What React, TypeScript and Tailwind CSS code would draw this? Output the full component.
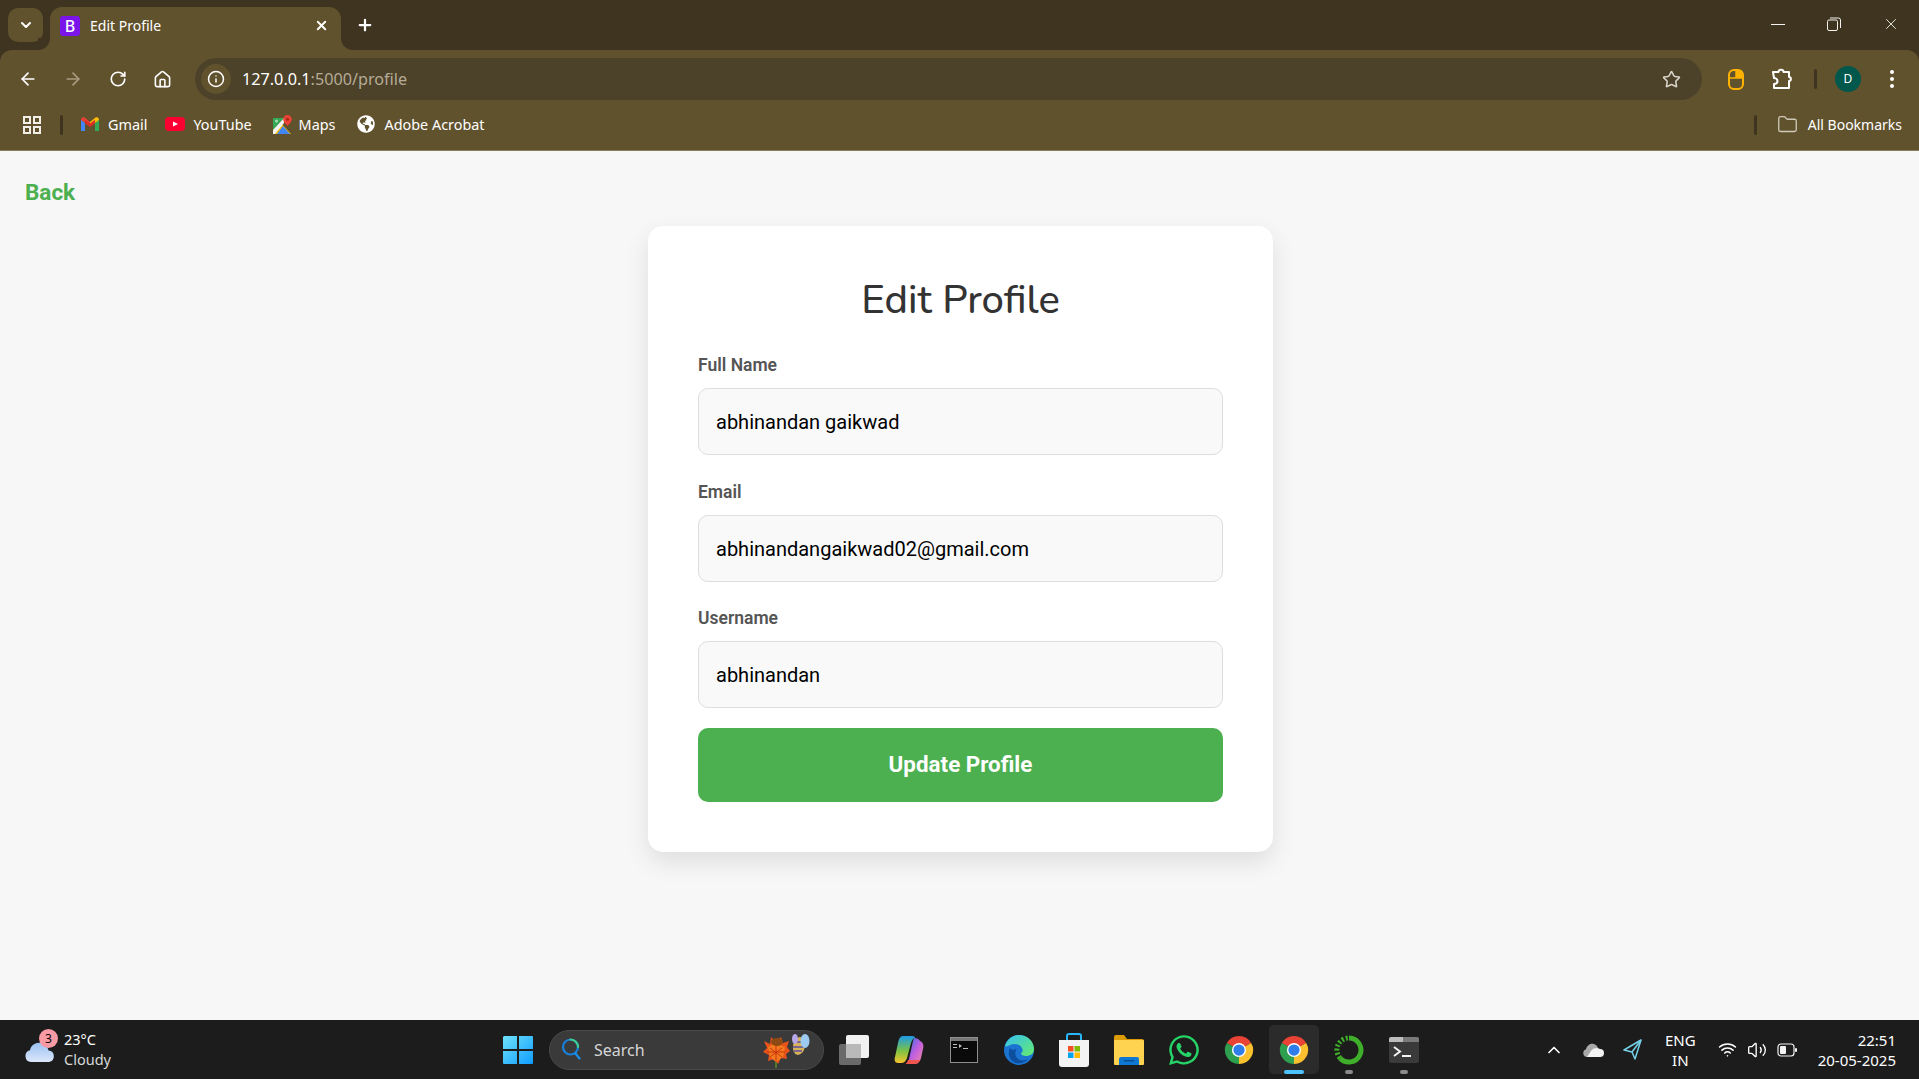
import { ArrowLeft, ArrowRight, ChevronDown, ChevronUp, Folder, House, Info, Plus, RotateCw, Star, Volume2, Wifi, X } from "lucide-react";
import { FaGlobeAmericas, FaWhatsapp } from "react-icons/fa";

function Divider() {
  return <div className="h-[20px] w-[3px] rounded-sm bg-[#3e3420]" />;
}

function AppsIcon() {
  return (
    <svg width="18" height="18" viewBox="0 0 18 18" fill="none" stroke="#f2efe8" strokeWidth="2">
      <rect x="1" y="1" width="6" height="6" />
      <rect x="11" y="1" width="6" height="6" />
      <rect x="1" y="11" width="6" height="6" />
      <rect x="11" y="11" width="6" height="6" />
    </svg>
  );
}

function GmailIcon() {
  return (
    <svg width="18" height="14" viewBox="0 0 18 14">
      <path d="M0 2.500V14h4V6z" fill="#4285f4" />
      <path d="M18 2.500V14h-4V6z" fill="#34a853" />
      <path d="M0 2.500C0 .5 2 -.5 3.500.6L9 5l-1 3-4-2.500L0 3z" fill="#ea4335" />
      <path d="M18 2.500C18 .5 16 -.5 14.500.6L9 5v3.500l5-2.500 4-3z" fill="#fbbc04" />
      <path d="M4 2.700 9 6.500 14 2.700V6.500L9 10 4 6.500z" fill="#d93025" />
    </svg>
  );
}

function YoutubeIcon() {
  return (
    <svg width="20" height="14" viewBox="0 0 20 14">
      <rect width="20" height="14" rx="4" fill="#ff0033" />
      <path d="M8 4.500 13 7l-5 2.500z" fill="#fff" />
    </svg>
  );
}

function MapsIcon() {
  return (
    <svg width="19" height="19" viewBox="0 0 19 19">
      <path d="M0 3h11L0 15z" fill="#34a853" />
      <path d="M0 15 8 8l10 11H0z" fill="#fbbc04" />
      <path d="M4 19 10 11l7 8z" fill="#4285f4" />
      <path d="M0 15 11 3v5L2 19H0z" fill="#f1f3f4" />
      <path d="M14.500 0a4.300 4.300 0 0 0-4.300 4.300c0 3 4.300 6.700 4.300 6.700s4.300-3.700 4.300-6.700A4.300 4.300 0 0 0 14.500 0z" fill="#ea4335" />
      <circle cx="14.500" cy="4.300" r="1.500" fill="#a52714" />
      <circle cx="3.500" cy="6" r="1.500" fill="#a8dab5" />
    </svg>
  );
}

function MouseExtIcon() {
  return (
    <svg width="16" height="21" viewBox="0 0 16 21" fill="none">
      <rect x="1" y="1" width="14" height="19" rx="5" stroke="#ffb300" strokeWidth="2" />
      <path d="M8 1h2a5 5 0 0 1 5 5v3H8z" fill="#ffb300" />
      <path d="M1 9h14M8 1v8" stroke="#ffb300" strokeWidth="1.500" />
    </svg>
  );
}

function PuzzleIcon() {
  return (
    <svg width="22" height="22" viewBox="0 0 22 22" fill="none" stroke="#fff" strokeWidth="2" strokeLinejoin="round">
      <path d="M2 4h5.500c0-3 5-3 5 0H18v5c2.500 0 2.500 4 0 4v7H3v-4c2.500 0 3.500-1 3.500-3S4.500 10 3 10z" />
    </svg>
  );
}

function RestoreIcon() {
  return (
    <svg width="14" height="14" viewBox="0 0 14 14" fill="none" stroke="#f4f2ec" strokeWidth="1">
      <rect x="0.500" y="3" width="10" height="10.500" rx="1.500" />
      <path d="M3 1h8.500a2 2 0 0 1 2 2v8" />
    </svg>
  );
}

function WeatherIcon() {
  return (
    <svg width="30" height="20" viewBox="0 0 30 20">
      <defs>
        <linearGradient id="cloudFill" x1="0" y1="0" x2="0" y2="1">
          <stop offset="0" stopColor="#9cc2f2" />
          <stop offset="1" stopColor="#dbe7fa" />
        </linearGradient>
      </defs>
      <path d="M6 20a6 6 0 0 1-1-11.800C6 3 11 0 16 1c4 1 7 4 7.500 7.500A5.800 5.800 0 0 1 24 20z" fill="url(#cloudFill)" />
    </svg>
  );
}

function WindowsLogo() {
  return (
    <svg width="30" height="30" viewBox="0 0 30 30">
      <defs>
        <linearGradient id="winFill" x1="0" y1="0" x2="1" y2="1">
          <stop offset="0" stopColor="#6fe3fb" />
          <stop offset="1" stopColor="#0f9bfd" />
        </linearGradient>
      </defs>
      <path d="M1 1h13v13H0V2zM16 1h13a1 1 0 0 1 1 1v12H16zM0 16h14v13H1a1 1 0 0 1-1-1zM16 16h14v12a1 1 0 0 1-1 1H16z" fill="url(#winFill)" />
    </svg>
  );
}

function SearchGlass() {
  return (
    <svg width="20" height="24" viewBox="0 0 20 24" fill="none" strokeWidth="2.200" strokeLinecap="round">
      <circle cx="8.500" cy="9" r="7.500" stroke="#1a7fd8" />
      <path d="M8.500 1.500a7.500 7.500 0 0 1 7.500 7.500" stroke="#3ecf8e" />
      <path d="m13.500 15.500 4 5" stroke="#1a8fe8" />
    </svg>
  );
}

function FlowerDoodle() {
  return (
    <svg width="52" height="36" viewBox="0 0 52 36">
      <path d="M3 9 9 12 10 5l5 5 5-5 2 6 6-2-2 6 3 4-4 3 1 5-6-1-3 6-4-5-6 2 1-6-6-3 4-4z" fill="#e8531a" />
      <path d="M7 15 15 11l9 4-2 10-7 5-6-5z" fill="#f47a1f" />
      <path d="M15 12v17M9 16l12 9M21 16 9 25M6 20h18" stroke="#c7330f" strokeWidth="1" />
      <ellipse cx="16" cy="10" rx="6" ry="4" fill="#8d4a12" />
      <path d="M15 30v6" stroke="#5d8a2c" strokeWidth="1.500" />
      <ellipse cx="38" cy="14" rx="6" ry="9" fill="#d8b25a" transform="rotate(12 38 14)" />
      <path d="M33 10h10M32 15h11M33 19h8" stroke="#5b4fa0" strokeWidth="1.500" />
      <ellipse cx="44" cy="9" rx="4.500" ry="7" fill="#9cc9ef" />
      <ellipse cx="34" cy="7" rx="3" ry="5" fill="#b7a6e8" />
    </svg>
  );
}

function TaskViewIcon() {
  return (
    <svg width="30" height="30" viewBox="0 0 30 30">
      <rect x="0" y="9" width="22" height="21" rx="2" fill="#6a6a6a" />
      <rect x="7" y="0" width="23" height="23" rx="2" fill="#f1f1f1" />
      <rect x="7" y="9" width="15" height="14" fill="#b9b9b9" />
    </svg>
  );
}

function CopilotIcon() {
  return (
    <svg width="30" height="30" viewBox="0 0 30 30">
      <defs>
        <linearGradient id="copL" x1="0" y1="0" x2="0" y2="1">
          <stop offset="0" stopColor="#1d9be8" />
          <stop offset="0.550" stopColor="#7cc243" />
          <stop offset="1" stopColor="#f7c52d" />
        </linearGradient>
        <linearGradient id="copR" x1="0" y1="0" x2="1" y2="1">
          <stop offset="0" stopColor="#2e6fe0" />
          <stop offset="0.500" stopColor="#c25fe0" />
          <stop offset="1" stopColor="#f08a9d" />
        </linearGradient>
      </defs>
      <path d="M20 3c3 0 5 1 6 3 3 1 4 4 3 8l-2 9c-1 4-4 6-7 6h-6l5-23z" fill="url(#copR)" />
      <path d="M9 1h9c2 0 3 .8 3 2-2 0-3 2-4 5l-4 15c-1 3-3 5-6 5H4c-3 0-4-3-3-6l3-14C5 4 6 1 9 1z" fill="url(#copL)" />
      <path d="M11 29h9c3 0 5-1 6-4H14c-.5 2-1.500 3.500-3 4z" fill="#f0564d" />
    </svg>
  );
}

function CmdIcon() {
  return (
    <svg width="28" height="26" viewBox="0 0 28 26">
      <rect x="0.500" y="0.500" width="27" height="25" fill="#0a0a0a" stroke="#8f8f8f" />
      <rect x="1" y="1" width="26" height="3" fill="#777" />
      <path d="M3 7h4v1H3zM3 10h4v1H3zM9 7l3 2-3 2zM13 11h5v1h-5z" fill="#bdbdbd" />
    </svg>
  );
}

function EdgeIcon() {
  return (
    <svg width="30" height="34" viewBox="0 0 30 30">
      <defs>
        <linearGradient id="edgeTop" x1="0" y1="0" x2="1" y2="1">
          <stop offset="0" stopColor="#35c1f1" />
          <stop offset="1" stopColor="#66eb6e" />
        </linearGradient>
      </defs>
      <circle cx="15" cy="15" r="15" fill="#1b74d2" />
      <path d="M1 11C3 4 9 0 15 0c8 0 15 6 15 14 0 5-4 7-8 7-3 0-5-1-5-3 2-1 2-3 1-5-2-4-8-5-12-3-2 1-4 2-5 1z" fill="url(#edgeTop)" />
      <path d="M12 28c-6-2-9-9-6-15 2 3 5 2 7 0-3 4-2 10 3 12 3 1 6 0 8-1-3 4-8 5-12 4z" fill="#0d4f9e" />
    </svg>
  );
}

function StoreIcon() {
  return (
    <svg width="30" height="34" viewBox="0 0 30 34">
      <path d="M8 8V3a2 2 0 0 1 2-2h10a2 2 0 0 1 2 2v5" fill="none" stroke="#29b6f6" strokeWidth="2" />
      <path d="M0 7h30v24a3 3 0 0 1-3 3H3a3 3 0 0 1-3-3z" fill="#f3f3f3" />
      <rect x="9" y="13" width="5.500" height="5.500" fill="#f25022" />
      <rect x="15.500" y="13" width="5.500" height="5.500" fill="#7fba00" />
      <rect x="9" y="19.500" width="5.500" height="5.500" fill="#00a4ef" />
      <rect x="15.500" y="19.500" width="5.500" height="5.500" fill="#ffb900" />
    </svg>
  );
}

function ExplorerIcon() {
  return (
    <svg width="30" height="30" viewBox="0 0 30 30">
      <path d="M0 2a2 2 0 0 1 2-2h8l3 4h15a2 2 0 0 1 2 2v4H0z" fill="#dc9c07" />
      <rect y="5" width="30" height="25" rx="1" fill="#ffd34f" />
      <path d="M5 30v-6a2 2 0 0 1 2-2h16a2 2 0 0 1 2 2v6z" fill="#0f78d4" />
      <rect x="10" y="25" width="10" height="1.500" fill="#0a4f90" />
    </svg>
  );
}

function ChromeIcon() {
  return (
    <svg width="30" height="30" viewBox="0 0 32 32">
      <path d="M16 16 3 8.500A15 15 0 0 1 29 8.500z" fill="#ea4335" />
      <path d="M16 16 29 8.500A15 15 0 0 1 16 31z" fill="#fbc02d" />
      <path d="M16 16V31A15 15 0 0 1 3 8.500z" fill="#2e9e4f" />
      <circle cx="16" cy="16" r="7.500" fill="#fff" />
      <circle cx="16" cy="16" r="6" fill="#2f7de9" />
    </svg>
  );
}

function RingIcon() {
  return (
    <svg width="30" height="30" viewBox="0 0 30 30" fill="none">
      <path d="M15 3a12 12 0 1 1-9 20" stroke="#3fae2a" strokeWidth="5" />
      <path d="M6 23A12 12 0 0 1 15 3" stroke="#3fae2a" strokeWidth="5" strokeDasharray="2 2" />
    </svg>
  );
}

function TerminalIcon() {
  return (
    <svg width="30" height="26" viewBox="0 0 30 26">
      <rect width="30" height="26" rx="2" fill="#3a3a3a" />
      <path d="M0 2a2 2 0 0 1 2-2h12v5H0z" fill="#bdbdbd" />
      <path d="M14 0h14a2 2 0 0 1 2 2v3H14z" fill="#7a7a7a" />
      <path d="m5 10 6 4.500L5 19" stroke="#f2f2f2" strokeWidth="2" fill="none" />
      <rect x="13" y="18" width="9" height="2" fill="#f2f2f2" />
    </svg>
  );
}

function OneDriveIcon() {
  return (
    <svg width="21" height="14" viewBox="0 0 21 14">
      <path d="M4 14a4 4 0 0 1-1-7.800C4 2 8 0 11 1c2 .7 3.500 2 4 4l-7 9z" fill="#a9a9a9" />
      <path d="M4 14 8 8c2-3 6-4 9-2a4 4 0 0 1 0 8z" fill="#f2f2f2" />
    </svg>
  );
}

function LocationIcon() {
  return (
    <svg width="19" height="21" viewBox="0 0 19 21" fill="none" stroke="#75d0e8" strokeWidth="1.500" strokeLinejoin="round">
      <path d="M18 1 1 11l8 2 3 7z" />
      <path d="M18 1 9 13" />
    </svg>
  );
}

function BatteryIcon() {
  return (
    <svg width="20" height="14" viewBox="0 0 20 14" fill="none">
      <rect x="1" y="1" width="16" height="12" rx="3" stroke="#f2f2f2" strokeWidth="1.200" />
      <rect x="3" y="3" width="6" height="8" rx="1" fill="#f2f2f2" />
      <rect x="18" y="5" width="2" height="4" rx="1" fill="#f2f2f2" />
    </svg>
  );
}

function Bookmark({ icon, label, className }: { icon: React.ReactNode; label: string; className: string }) {
  return (
    <div className={`flex items-center ${className}`}>
      {icon}
      <span>{label}</span>
    </div>
  );
}

function Field({ label, value, className }: { label: string; value: string; className: string }) {
  return (
    <div className={className}>
      <label className="block h-[23px] text-[17.500px] leading-[23px] font-semibold text-[#555] font-['Roboto',sans-serif]">{label}</label>
      <input
        readOnly
        value={value}
        className="mt-[11px] block h-[67px] w-full rounded-[10px] border border-[#dddddd] bg-[#f9f9f9] px-[17px] text-[20px] text-black font-['Roboto',sans-serif] outline-none"
      />
    </div>
  );
}

function TaskbarSlot({ children, dot }: { children: React.ReactNode; dot?: boolean }) {
  return (
    <div className="relative flex h-[49px] w-[50px] items-center justify-center mr-[5px]">
      {children}
      {dot && <div className="absolute bottom-0 h-[4px] w-[8px] rounded-full bg-[#8a8a8a]" />}
    </div>
  );
}

export default function App() {
  return (
    <div className="flex h-screen w-full flex-col overflow-hidden bg-[#f7f7f7] font-['Noto_Sans',sans-serif]">
      {/* tab strip */}
      <div className="flex h-[50px] shrink-0 bg-[#3e3420] text-white">
        <div className="ml-[8px] mt-[8px] flex h-[34px] w-[35px] items-center justify-center rounded-[10px] bg-[#61522e]">
          <ChevronDown size={16} strokeWidth={3} />
        </div>
        <div className="relative ml-[7px] mt-[7px] flex h-[43px] w-[291px] items-center rounded-t-[12px] bg-[#61522e] pb-[6px] pl-[10px]">
          {/* concave feet of the active tab */}
          <div className="absolute bottom-0 left-[-12px] h-[12px] w-[12px] bg-[#61522e]">
            <div className="h-full w-full rounded-br-[12px] bg-[#3e3420]" />
          </div>
          <div className="absolute bottom-0 right-[-12px] h-[12px] w-[12px] bg-[#61522e]">
            <div className="h-full w-full rounded-bl-[12px] bg-[#3e3420]" />
          </div>
          <div className="flex h-[20px] w-[20px] items-center justify-center rounded-[3px] bg-[#7a14e8] text-[16px] font-medium leading-none">B</div>
          <span className="ml-[10px] text-[14px]">Edit Profile</span>
          <X size={15} strokeWidth={3} className="ml-auto mr-[12px]" />
        </div>
        <div className="ml-[15px] flex h-[50px] items-center">
          <Plus size={18} strokeWidth={3} />
        </div>
        <div className="ml-auto flex h-[50px] items-center pb-[2px]">
          <div className="h-px w-[14px] bg-[#f4f2ec]" />
          <div className="ml-[42px] flex"><RestoreIcon /></div>
          <X size={18} strokeWidth={1.2} className="ml-[41px] mr-[19px] text-[#f4f2ec]" />
        </div>
      </div>

      {/* toolbar */}
      <div className="shrink-0 bg-[#3e3420]">
        <div className="flex h-[58px] items-start rounded-t-[12px] bg-[#61522e] pt-[8px] text-white">
          <div className="flex h-[42px] items-center pl-[18px]">
            <ArrowLeft size={20} strokeWidth={2} />
            <ArrowRight size={20} strokeWidth={2} className="ml-[25px] text-[#a89c80]" />
            <RotateCw size={18} strokeWidth={2.2} className="ml-[26px]" />
            <House size={19} strokeWidth={2} className="ml-[26px]" />
          </div>
          <div className="ml-[23px] flex h-[42px] w-[1507px] items-center rounded-full bg-[#4c4129] pl-[6px] pr-[21px]">
            <div className="flex h-[30px] w-[30px] items-center justify-center rounded-full bg-[#61522e]">
              <Info size={18} strokeWidth={2} />
            </div>
            <span className="ml-[11px] text-[16.200px]">
              127.0.0.1<span className="text-[#b5ab96]">:5000/profile</span>
            </span>
            <Star size={19} strokeWidth={2} className="ml-auto text-[#d8d4c9]" />
          </div>
          <div className="flex h-[42px] items-center">
            <div className="ml-[26px] flex"><MouseExtIcon /></div>
            <div className="ml-[27px] flex"><PuzzleIcon /></div>
            <div className="ml-[21px]"><Divider /></div>
            <div className="ml-[18px] flex h-[26px] w-[26px] items-center justify-center rounded-full bg-[#00574b] text-[12px]">D</div>
            <div className="ml-[29px] flex flex-col gap-[3px]">
              <div className="h-[4px] w-[4px] rounded-full bg-white" />
              <div className="h-[4px] w-[4px] rounded-full bg-white" />
              <div className="h-[4px] w-[4px] rounded-full bg-white" />
            </div>
          </div>
        </div>
      </div>

      {/* bookmarks */}
      <div className="flex h-[43px] shrink-0 items-center border-b border-[#8a7d5c] bg-[#61522e] pb-[9px] text-[14.400px] text-white">
        <div className="ml-[23px] flex"><AppsIcon /></div>
        <div className="ml-[19px]"><Divider /></div>
        <Bookmark icon={<GmailIcon />} label="Gmail" className="ml-[18px] gap-[9px]" />
        <Bookmark icon={<YoutubeIcon />} label="YouTube" className="ml-[18px] gap-[8px]" />
        <Bookmark icon={<MapsIcon />} label="Maps" className="ml-[21px] gap-[7px]" />
        <Bookmark icon={<FaGlobeAmericas size={18} className="text-white" />} label="Adobe Acrobat" className="ml-[22px] gap-[9px]" />
        <div className="ml-auto"><Divider /></div>
        <Folder size={21} strokeWidth={1.5} className="ml-[20px] text-[#cfc9b8]" />
        <span className="ml-[10px] mr-[17px] text-[14px]">All Bookmarks</span>
      </div>

      {/* page */}
      <div className="relative flex min-h-0 flex-1 flex-col items-center bg-[#f7f7f7]">
        <a className="absolute left-[25px] top-[25px] text-[22.500px] font-bold text-[#4caf50] font-['Roboto',sans-serif]">Back</a>
        <div className="ml-[2px] mt-[75px] h-[626px] w-[625px] rounded-[15px] bg-white px-[50px] pt-[44px] shadow-[0_10px_25px_rgba(0,0,0,0.1)]">
          <h1 className="h-[60px] text-center text-[40px] leading-[60px] font-medium text-[#333] font-['Nunito','Lato',sans-serif]">Edit Profile</h1>
          <Field label="Full Name" value="abhinandan gaikwad" className="mt-[24px]" />
          <Field label="Email" value="abhinandangaikwad02@gmail.com" className="mt-[26px]" />
          <Field label="Username" value="abhinandan" className="mt-[25px]" />
          <button className="mt-[20px] h-[74px] w-full rounded-[10px] bg-[#4caf50] text-[22.400px] font-bold text-white font-['Roboto',sans-serif]">Update Profile</button>
        </div>
      </div>

      {/* taskbar */}
      <div className="flex h-[59px] shrink-0 items-center bg-[#1c1c1c] text-white">
        <div className="relative ml-[25px] flex w-[30px] pt-[5px]">
          <WeatherIcon />
          <div className="absolute left-[14px] top-[-8px] flex h-[19px] w-[19px] items-center justify-center rounded-full bg-[#f89ba5] text-[12px] text-black">3</div>
        </div>
        <div className="ml-[9px] w-[439px] pb-[2px] text-[14.500px] leading-[20px]">
          <div>23°C</div>
          <div className="text-[#d8d8d8]">Cloudy</div>
        </div>
        <WindowsLogo />
        <div className="ml-[16px] flex h-[40px] w-[275px] items-center rounded-full border border-[#4a4a4a] bg-[#3a3a3a] pl-[12px]">
          <SearchGlass />
          <span className="ml-[12px] text-[16px] text-[#d6d6d6]">Search</span>
          <div className="ml-auto mr-[10px] flex"><FlowerDoodle /></div>
        </div>
        <div className="ml-[5px] flex items-center">
          <TaskbarSlot><TaskViewIcon /></TaskbarSlot>
          <TaskbarSlot><CopilotIcon /></TaskbarSlot>
          <TaskbarSlot><CmdIcon /></TaskbarSlot>
          <TaskbarSlot><EdgeIcon /></TaskbarSlot>
          <TaskbarSlot><StoreIcon /></TaskbarSlot>
          <TaskbarSlot><ExplorerIcon /></TaskbarSlot>
          <TaskbarSlot><FaWhatsapp size={34} className="text-[#25d366]" /></TaskbarSlot>
          <TaskbarSlot><ChromeIcon /></TaskbarSlot>
          <div className="relative mr-[5px] flex h-[49px] w-[50px] items-center justify-center rounded-[5px] bg-[#2b2b2b]">
            <ChromeIcon />
            <div className="absolute bottom-0 h-[4px] w-[20px] rounded-full bg-[#4cc2ff]" />
          </div>
          <TaskbarSlot dot><RingIcon /></TaskbarSlot>
          <TaskbarSlot dot><TerminalIcon /></TaskbarSlot>
        </div>
        <div className="ml-auto flex items-center">
          <ChevronUp size={20} strokeWidth={2} />
          <div className="ml-[19px] flex"><OneDriveIcon /></div>
          <div className="ml-[19px] flex"><LocationIcon /></div>
          <div className="ml-[23px] text-center text-[15px] leading-[20px]">
            <div>ENG</div>
            <div>IN</div>
          </div>
          <Wifi size={19} strokeWidth={2} className="ml-[22px]" />
          <Volume2 size={20} strokeWidth={1.6} className="ml-[10px]" />
          <div className="ml-[10px] flex"><BatteryIcon /></div>
          <div className="ml-[21px] mr-[23px] text-right text-[15px] leading-[20px]">
            <div>22:51</div>
            <div>20-05-2025</div>
          </div>
        </div>
      </div>
    </div>
  );
}
